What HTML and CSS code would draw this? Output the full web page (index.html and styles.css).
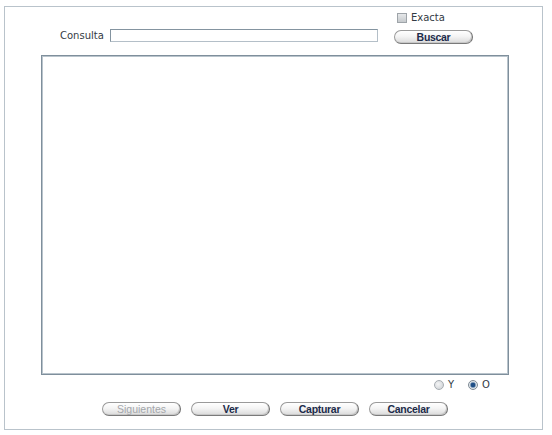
FILE: index.html
```html
<!DOCTYPE html>
<html lang="es">
<head>
<meta charset="utf-8">
<title>Consulta</title>
<link rel="stylesheet" href="styles.css">
</head>
<body>
<div class="panel">
  <div class="row-exacta">
    <span class="check"></span>
    <span class="label">Exacta</span>
  </div>
  <div class="row-query">
    <span class="label query-label">Consulta</span>
    <span class="input"></span>
    <span class="btn btn-buscar">Buscar</span>
  </div>
  <div class="results"></div>
  <div class="row-radios">
    <span class="radio"></span><span class="label r-label">Y</span>
    <span class="radio on"></span><span class="label r-label">O</span>
  </div>
  <div class="row-buttons">
    <span class="btn disabled">Siguientes</span>
    <span class="btn">Ver</span>
    <span class="btn">Capturar</span>
    <span class="btn">Cancelar</span>
  </div>
</div>
</body>
</html>
```
FILE: styles.css
```css
html, body {
  margin: 0;
  padding: 0;
  background: #ffffff;
}
body {
  font-family: "DejaVu Sans", Verdana, sans-serif;
  font-size: 10px;
  color: #333b44;
}
.panel {
  box-sizing: border-box;
  margin: 6px 0 0 4px;
  width: 539px;
  height: 424px;
  border: 1px solid #b9c3cb;
  display: flex;
  flex-direction: column;
}
.label {
  line-height: 12px;
}
.row-exacta {
  display: flex;
  align-items: center;
  gap: 4px;
  margin: 5px 0 0 392px;
  height: 12px;
}
.check {
  box-sizing: border-box;
  width: 10px;
  height: 10px;
  border: 1px solid #9ea4a9;
  background: linear-gradient(#e6e8ea, #c6cacd);
}
.row-query {
  display: flex;
  align-items: flex-start;
  margin: 5px 0 0 55px;
  height: 15px;
}
.query-label {
  margin-top: 1px;
  width: 50px;
}
.input {
  box-sizing: border-box;
  width: 268px;
  height: 13px;
  border: 1px solid #8494a0;
  border-bottom-color: #b4bfc8;
  border-right-color: #b4bfc8;
  background: #fff;
}
.btn {
  box-sizing: border-box;
  width: 79px;
  height: 14px;
  border: 1px solid #9a9a9a;
  border-right-color: #6e6e6e;
  border-bottom-color: #7a7a7a;
  border-radius: 7px;
  background: linear-gradient(#ffffff 0%, #f4f4f4 45%, #dadada 100%);
  box-shadow: inset -1px -1px 0 #c8c8c8;
  font-family: "Liberation Sans", Arial, sans-serif;
  font-weight: bold;
  font-size: 10.5px;
  letter-spacing: -0.3px;
  line-height: 12px;
  text-align: center;
  color: #1c2b4a;
}
.btn.disabled {
  color: #a3a6aa;
  font-weight: normal;
  letter-spacing: 0;
}
.btn-buscar {
  margin: 1px 0 0 16px;
}
.results {
  box-sizing: border-box;
  margin: 11px 0 0 36px;
  width: 468px;
  height: 320px;
  border: 1px solid #7f8f9c;
  box-shadow: inset 1px 1px 0 #b9c4cc, inset -1px -1px 0 #b9c4cc;
}
.row-radios {
  display: flex;
  align-items: center;
  margin: 3px 0 0 429px;
  height: 13px;
}
.radio {
  box-sizing: border-box;
  width: 10px;
  height: 10px;
  border-radius: 50%;
  border: 1px solid #a7adb2;
  background: radial-gradient(circle at 40% 40%, #f4f5f6, #c9cdd1);
}
.radio.on {
  border-color: #7e8a94;
  background: radial-gradient(circle, #1f4f86 0 2px, #7d9ab8 2.5px, #dfe5ea 3.5px);
  margin-left: 14px;
}
.r-label {
  margin-left: 4px;
}
.row-buttons {
  display: flex;
  gap: 10px;
  margin: 11px 0 0 97px;
}
```
